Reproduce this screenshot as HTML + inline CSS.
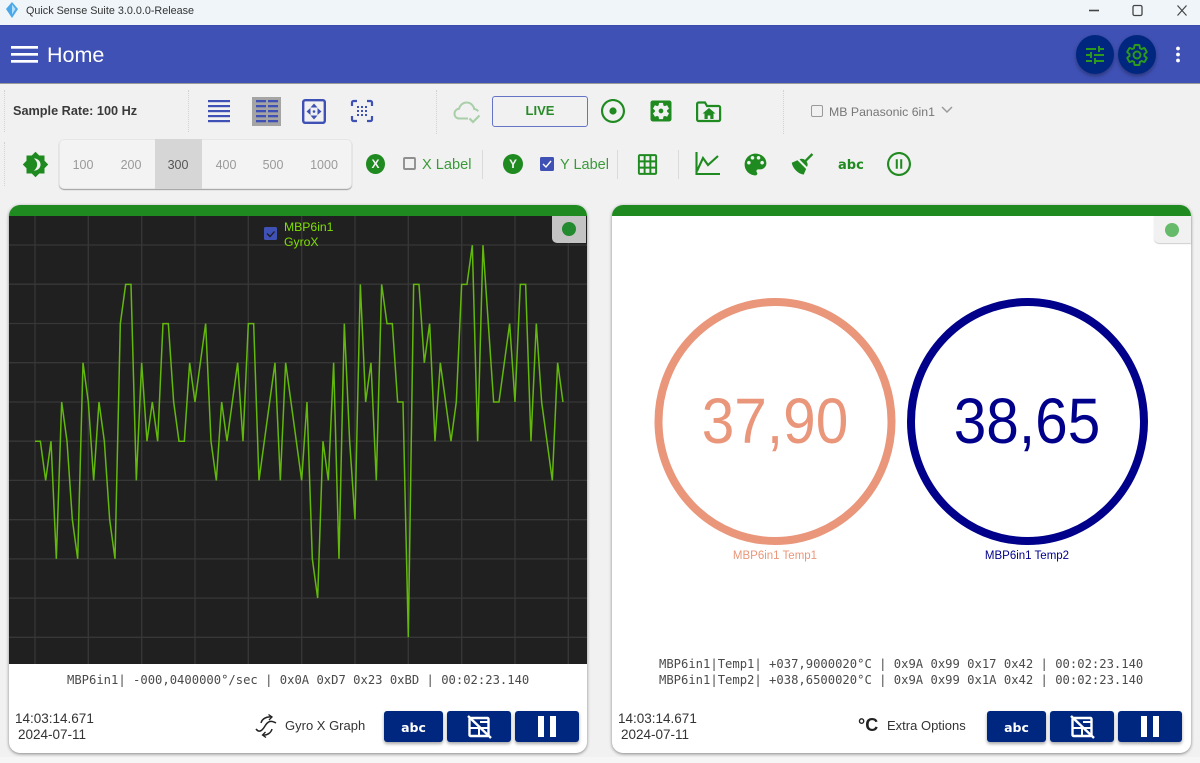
<!DOCTYPE html>
<html><head><meta charset="utf-8"><title>Quick Sense Suite</title>
<style>
html,body{margin:0;padding:0}
body{width:1200px;height:763px;overflow:hidden;position:relative;background:#f1f1f1;font-family:"Liberation Sans",sans-serif;color:#333}
.a{position:absolute;white-space:nowrap}
svg.a{overflow:visible}
.dot{position:absolute;width:0;border-left:1px dotted #d2d2d2}
.sep{position:absolute;width:1px;background:#dadada}
.card{position:absolute;top:205px;height:548px;background:#fff;border-radius:11px;box-shadow:0 1px 3px rgba(0,0,0,.45);overflow:hidden}
.bar{position:absolute;left:0;right:0;top:0;height:11px;background:#1f8a1f}
.btn{position:absolute;top:711px;height:31px;background:#00277f;border-radius:3px;box-shadow:0 2px 3px rgba(0,0,0,.35)}
.mono{font-family:"DejaVu Sans Mono",monospace;font-size:12.2px;color:#4a4a4a;line-height:16px}
.seg{position:absolute;top:157px;font-size:12.5px;color:#9a9a9a;line-height:16px;transform:translateX(-50%)}
.abc{font-family:"DejaVu Sans",sans-serif;font-weight:bold}
.big{transform:scaleX(.915);transform-origin:50% 50%}
</style></head><body>

<div class="a" style="left:0;top:757px;width:1200px;height:6px;background:#f6f6f6"></div>

<!-- title bar -->
<div class="a" style="left:0;top:0;width:1200px;height:25px;background:#eff5f9"></div>
<svg class="a" style="left:6px;top:2px" width="12" height="16" viewBox="0 0 12 16"><path d="M6 0L12 7 6 16 0 7z" fill="#4aa8ea"/><path d="M6 2.500L9.500 7 6 12.500z" fill="#b4e0fa"/></svg>
<div class="a" style="left:26px;top:4px;font-size:10.8px;line-height:15px;color:#333">Quick Sense Suite 3.0.0.0-Release</div>
<svg class="a" style="left:1085px;top:3px" width="110" height="16" viewBox="0 0 110 16" fill="none" stroke="#444"><path d="M4 7.500H14" stroke-width="1.600"/><rect x="48" y="2.500" width="9" height="10" rx="1.500" stroke-width="1.300"/><path d="M92.500 2.500L101.500 12.500M101.500 2.500L92.500 12.500" stroke-width="1.200"/></svg>

<!-- app bar -->
<div class="a" style="left:0;top:25px;width:1200px;height:59px;background:#3f51b5;border-top:1px solid #3a4aa8;box-sizing:border-box;border-bottom:1px solid #9a9a9a"></div>
<svg class="a" style="left:11px;top:46px" width="27" height="18"><rect y="0" width="27" height="2.700" fill="#fff"/><rect y="7" width="27" height="2.700" fill="#fff"/><rect y="14" width="27" height="2.700" fill="#fff"/></svg>
<div class="a" style="left:47px;top:41px;font-size:21.5px;line-height:28px;color:#fff">Home</div>
<div class="a" style="left:1076px;top:35px;width:38px;height:39px;border-radius:50%;background:#00277f;box-shadow:0 2px 4px rgba(0,0,0,.35)"></div>
<div class="a" style="left:1118px;top:35px;width:38px;height:39px;border-radius:50%;background:#00277f;box-shadow:0 2px 4px rgba(0,0,0,.35)"></div>
<svg class="a" style="left:1083px;top:43px" width="24" height="24" viewBox="0 0 24 24"><path fill="#2c9a1c" d="M3 17v2h6v-2H3zM3 5v2h10V5H3zm10 16v-2h8v-2h-8v-2h-2v6h2zM7 9v2H3v2h4v2h2V9H7zm14 4v-2H11v2h10zm-6-4h2V7h4V5h-4V3h-2v6z"/></svg>
<svg class="a" style="left:1125px;top:43px" width="24" height="24" viewBox="0 0 24 24"><path fill="none" stroke="#2c9a1c" stroke-width="1.900" d="M19.430 12.980c.04-.32.07-.64.07-.98s-.03-.66-.07-.98l2.110-1.650c.19-.15.24-.42.12-.64l-2-3.460c-.12-.22-.39-.3-.61-.22l-2.490 1c-.52-.4-1.080-.73-1.690-.98l-.38-2.650C14.460 2.180 14.250 2 14 2h-4c-.25 0-.46.18-.49.42l-.38 2.650c-.61.25-1.170.59-1.690.98l-2.490-1c-.23-.09-.49 0-.61.22l-2 3.460c-.13.22-.07.49.12.64l2.110 1.650c-.04.32-.07.65-.07.98s.03.66.07.98l-2.110 1.650c-.19.15-.24.42-.12.64l2 3.460c.12.22.39.3.61.22l2.490-1c.52.4 1.080.73 1.690.98l.38 2.650c.03.24.24.42.49.42h4c.25 0 .46-.18.49-.42l.38-2.650c.61-.25 1.170-.59 1.690-.98l2.490 1c.23.09.49 0 .61-.22l2-3.460c.12-.22.07-.49-.12-.64l-2.110-1.650zM12 15.500c-1.930 0-3.500-1.570-3.500-3.500s1.570-3.500 3.500-3.500 3.500 1.570 3.500 3.500-1.570 3.500-3.500 3.500z"/></svg>
<svg class="a" style="left:1175px;top:46px" width="7" height="18"><circle cx="3" cy="2.500" r="1.900" fill="#fff"/><circle cx="3" cy="8.500" r="1.900" fill="#fff"/><circle cx="3" cy="14.500" r="1.900" fill="#fff"/></svg>

<!-- toolbar row 1 -->
<div class="dot" style="left:4px;top:90px;height:42px"></div>
<div class="dot" style="left:4px;top:142px;height:44px"></div>
<div class="dot" style="left:188px;top:90px;height:42px"></div>
<div class="dot" style="left:436px;top:90px;height:44px"></div>
<div class="dot" style="left:783px;top:90px;height:44px"></div>
<div class="a" style="left:13px;top:103px;font-size:12.7px;line-height:16px;font-weight:bold;color:#3a3a3a">Sample Rate: 100 Hz</div>

<svg class="a" style="left:208px;top:100px" width="22" height="23" fill="#3f51b5"><rect y="0" width="22" height="2.200"/><rect y="5" width="22" height="2.200"/><rect y="10" width="22" height="2.200"/><rect y="15" width="22" height="2.200"/><rect y="20" width="22" height="2.200"/></svg>
<div class="a" style="left:252px;top:97px;width:29px;height:29px;background:#a4a4a4"></div>
<svg class="a" style="left:256px;top:100px" width="22" height="23" fill="#3f51b5"><rect y="0" width="10" height="2.300"/><rect x="12" y="0" width="10" height="2.300"/><rect y="5" width="10" height="2.300"/><rect x="12" y="5" width="10" height="2.300"/><rect y="10" width="10" height="2.300"/><rect x="12" y="10" width="10" height="2.300"/><rect y="15" width="10" height="2.300"/><rect x="12" y="15" width="10" height="2.300"/><rect y="20" width="10" height="2.300"/><rect x="12" y="20" width="10" height="2.300"/></svg>
<svg class="a" style="left:302px;top:99px" width="24" height="25" viewBox="0 0 24 25"><rect x="1.200" y="1.200" width="21.600" height="22.600" rx="2" fill="none" stroke="#3f51b5" stroke-width="2.400"/><path fill="#3f51b5" d="M12 4.500L8.500 8.500h7zM12 20.500L8.500 16.500h7zM4.500 12.500L8.500 9v7zM19.500 12.500L15.500 9v7z"/><circle cx="12" cy="12.500" r="1.300" fill="#3f51b5"/></svg>
<svg class="a" style="left:351px;top:100px" width="22" height="22" viewBox="0 0 22 22" fill="none" stroke="#3f51b5" stroke-width="2.200"><path d="M1 6V2.500C1 1.700 1.700 1 2.500 1H6M16 1h3.500c.8 0 1.500.7 1.500 1.500V6M21 16v3.500c0 .8-.7 1.500-1.500 1.500H16M6 21H2.500C1.700 21 1 20.300 1 19.500V16"/><g fill="#3f51b5" stroke="none"><rect x="6" y="6" width="2" height="2"/><rect x="10" y="6" width="2" height="2"/><rect x="14" y="6" width="2" height="2"/><rect x="6" y="10" width="2" height="2"/><rect x="10" y="10" width="2" height="2"/><rect x="14" y="10" width="2" height="2"/><rect x="6" y="14" width="2" height="2"/><rect x="10" y="14" width="2" height="2"/><rect x="14" y="14" width="2" height="2"/></g></svg>

<svg class="a" style="left:453px;top:100px" width="28" height="24" viewBox="0 0 28 24" fill="none" stroke="#a9cfa9" stroke-width="2"><path d="M15 18.500H6.500C3.500 18.500 1.500 16.500 1.500 13.500 1.500 11 3.500 9 6 8.800 7 5.200 10 2.500 13.500 2.500c4 0 7 2.800 7.700 6.500 1.300.2 3 .8 4 2.300"/><path d="M16.500 18.500l3.500 3.500 6.500-6.500" stroke-width="2.200"/></svg>
<div class="a" style="left:492px;top:96px;width:96px;height:31px;box-sizing:border-box;border:1.500px solid #6674c8;border-radius:3px;text-align:center;font-size:13px;font-weight:bold;line-height:28px;color:#2a8a2a">LIVE</div>
<svg class="a" style="left:601px;top:99px" width="24" height="24" viewBox="2 2 20 20"><path fill="#1f8a1f" d="M12 9a3 3 0 1 0 0 6 3 3 0 0 0 0-6zM12 2C6.480 2 2 6.480 2 12s4.480 10 10 10 10-4.480 10-10S17.520 2 12 2zm0 18.200c-4.530 0-8.200-3.670-8.200-8.200S7.470 3.800 12 3.800s8.200 3.670 8.200 8.200-3.670 8.200-8.200 8.200z"/></svg>
<svg class="a" style="left:647px;top:97px" width="28" height="28" viewBox="0 0 24 24"><path fill="#1f8a1f" fill-rule="evenodd" d="M12 10c-1.100 0-2 .9-2 2s.9 2 2 2 2-.9 2-2-.9-2-2-2zm7-7H5c-1.110 0-2 .9-2 2v14c0 1.100.89 2 2 2h14c1.110 0 2-.9 2-2V5c0-1.100-.89-2-2-2zm-1.750 9c0 .23-.02.46-.05.68l1.480 1.160c.13.11.17.3.08.45l-1.400 2.420c-.09.15-.27.21-.43.15l-1.740-.7c-.36.28-.76.51-1.180.69l-.26 1.850c-.03.17-.18.3-.35.3h-2.800c-.17 0-.32-.13-.35-.29l-.26-1.850c-.43-.18-.82-.41-1.180-.69l-1.740.7c-.16.06-.34 0-.43-.15l-1.400-2.420c-.09-.15-.05-.34.08-.45l1.480-1.160c-.03-.23-.05-.46-.05-.69 0-.23.02-.46.05-.68l-1.480-1.160c-.13-.11-.17-.3-.08-.45l1.400-2.420c.09-.15.27-.21.43-.15l1.740.7c.36-.28.76-.51 1.180-.69l.26-1.850c.03-.17.18-.3.35-.3h2.800c.17 0 .32.13.35.29l.26 1.850c.43.18.82.41 1.180.69l1.740-.7c.16-.06.34 0 .43.15l1.400 2.420c.09.15.05.34-.08.45l-1.480 1.160c.03.23.05.46.05.69z"/></svg>
<svg class="a" style="left:696px;top:101px" width="26" height="21" viewBox="0 0 26 21"><path fill="none" stroke="#1f8a1f" stroke-width="2.200" d="M1.100 3V18.500c0 .8.700 1.500 1.500 1.500h20c.8 0 1.500-.7 1.500-1.500V6.500c0-.8-.7-1.500-1.500-1.500H11L9 1.500H2.600C1.800 1.500 1.100 2.200 1.100 3z"/><path fill="#1f8a1f" d="M13 7L6.500 12.500h2V18h3.200v-3.500h2.600V18h3.200v-5.500h2z"/></svg>
<svg class="a" style="left:811px;top:105px" width="12" height="12"><rect x=".5" y=".5" width="11" height="11" rx="1.500" fill="none" stroke="#9a9a9a"/></svg>
<div class="a" style="left:829px;top:104px;font-size:12.3px;line-height:16px;color:#777">MB Panasonic 6in1</div>
<svg class="a" style="left:941px;top:106px" width="12" height="8"><path d="M1 1l5 5 5-5" fill="none" stroke="#9a9a9a" stroke-width="1.500"/></svg>

<!-- toolbar row 2 -->
<svg class="a" style="left:22px;top:151px" width="27" height="27" viewBox="0 0 24 24"><path fill="#1f8a1f" d="M20 15.310L23.310 12 20 8.690V4h-4.690L12 .69 8.690 4H4v4.690L.69 12 4 15.310V20h4.690L12 23.310 15.310 20H20v-4.690z"/><path fill="#f1f1f1" d="M10.500 6.500c3.500 0 6 2.500 6 5.500s-2.500 5.500-6 5.500c2-1.500 3-3.500 3-5.500s-1-4-3-5.500z"/></svg>

<div class="a" style="left:59px;top:139px;width:293px;height:50px;box-sizing:border-box;background:#f3f3f3;border:1px solid #e6e6e6;border-radius:5px;box-shadow:0 1px 1px rgba(0,0,0,.35)"></div>
<div class="a" style="left:155px;top:139px;width:47px;height:50px;background:#d6d6d6"></div>
<div class="seg" style="left:83px">100</div>
<div class="seg" style="left:131px">200</div>
<div class="seg" style="left:178px;color:#555">300</div>
<div class="seg" style="left:226px">400</div>
<div class="seg" style="left:273px">500</div>
<div class="seg" style="left:324px">1000</div>

<div class="a" style="left:366px;top:154px;width:19px;height:20px;border-radius:50%;background:#1f8a1f;color:#f3f3f3;font-size:12px;font-weight:bold;line-height:20px;text-align:center">X</div>
<svg class="a" style="left:403px;top:157px" width="13" height="13"><rect x="1" y="1" width="11" height="11" rx="1" fill="none" stroke="#8f8f8f" stroke-width="1.900"/></svg>
<div class="a" style="left:422px;top:157px;font-size:14.6px;line-height:17px;color:#3a9a3a">X Label</div>
<div class="sep" style="left:482px;top:150px;height:29px"></div>
<div class="a" style="left:503px;top:154px;width:20px;height:20px;border-radius:50%;background:#1f8a1f;color:#f3f3f3;font-size:12px;font-weight:bold;line-height:20px;text-align:center">Y</div>
<svg class="a" style="left:540px;top:157px" width="14" height="14"><rect width="14" height="14" rx="1.500" fill="#3f51b5"/><path d="M3 7l3 3 5-6" fill="none" stroke="#fff" stroke-width="1.400"/></svg>
<div class="a" style="left:560px;top:157px;font-size:14.5px;line-height:17px;color:#3a9a3a">Y Label</div>
<div class="sep" style="left:617px;top:150px;height:29px"></div>
<svg class="a" style="left:636px;top:152px" width="23" height="25" viewBox="0 0 24 24" preserveAspectRatio="none"><path fill="#1f8a1f" d="M20 2H4c-1.100 0-2 .9-2 2v16c0 1.100.9 2 2 2h16c1.100 0 2-.9 2-2V4c0-1.100-.9-2-2-2zM8 20H4v-4h4v4zm0-6H4v-4h4v4zm0-6H4V4h4v4zm6 12h-4v-4h4v4zm0-6h-4v-4h4v4zm0-6h-4V4h4v4zm6 12h-4v-4h4v4zm0-6h-4v-4h4v4zm0-6h-4V4h4v4z"/></svg>
<div class="sep" style="left:678px;top:150px;height:29px"></div>
<svg class="a" style="left:695px;top:152px" width="26" height="25" viewBox="0 0 26 25" fill="none" stroke="#1f8a1f" stroke-width="2.100"><path d="M1.500 0V22H25"/><path d="M2 19L8 6l5 7L23 4"/></svg>
<svg class="a" style="left:741px;top:150px" width="29" height="29" viewBox="0 0 24 24"><path fill="#1f8a1f" d="M12 3c-4.970 0-9 4.030-9 9s4.030 9 9 9c.83 0 1.500-.67 1.500-1.500 0-.39-.15-.74-.39-1.010-.23-.26-.38-.61-.38-.99 0-.83.67-1.500 1.500-1.500H16c2.760 0 5-2.240 5-5 0-4.420-4.030-8-9-8zm-5.500 9c-.83 0-1.500-.67-1.500-1.500S5.670 9 6.500 9 8 9.670 8 10.500 7.330 12 6.500 12zm3-4C8.670 8 8 7.330 8 6.500S8.670 5 9.500 5s1.500.67 1.500 1.500S10.330 8 9.500 8zm5 0c-.83 0-1.500-.67-1.500-1.500S13.670 5 14.500 5s1.500.67 1.500 1.500S15.330 8 14.500 8zm3 4c-.83 0-1.500-.67-1.500-1.500S16.670 9 17.500 9s1.500.67 1.500 1.500-.67 1.500-1.500 1.500z"/></svg>
<svg class="a" style="left:789px;top:150px" width="28" height="28" viewBox="0 0 24 24"><path fill="#1f8a1f" d="M19.360 2.720L20.780 4.140L15.060 9.850C16.130 11.390 16.280 13.240 15.380 14.440L9.060 8.120C10.260 7.220 12.110 7.370 13.650 8.440L19.360 2.720M5.930 17.570C3.920 15.560 2.690 13.160 2.350 10.920L7.230 8.830L14.670 16.270L12.580 21.150C10.340 20.810 7.940 19.580 5.930 17.570Z"/></svg>
<div class="a abc" style="left:838px;top:158px;font-size:13px;line-height:16px;color:#1f8a1f">abc</div>
<svg class="a" style="left:886.500px;top:152px" width="24" height="24" viewBox="2 2 20 20"><path fill="#1f8a1f" d="M9.300 16h1.700V8H9.300v8zM12 2C6.480 2 2 6.480 2 12s4.480 10 10 10 10-4.480 10-10S17.520 2 12 2zm0 18.200c-4.530 0-8.200-3.670-8.200-8.200S7.470 3.800 12 3.800s8.200 3.670 8.200 8.200-3.670 8.200-8.200 8.200zM13 16h1.700V8H13v8z"/></svg>

<!-- card 1 -->
<div class="card" style="left:9px;width:578px"><div class="bar"></div></div>
<svg class="a" style="left:9px;top:216px" width="578" height="448" viewBox="9 216 578 448">
<rect x="9" y="216" width="578" height="448" fill="#202020"/>
<g stroke="#373737" stroke-width="1.300">
<path d="M35 216V664M88.300 216V664M141.700 216V664M195 216V664M248.300 216V664M301.700 216V664M355 216V664M408.300 216V664M461.700 216V664M515 216V664M568.300 216V664"/>
<path d="M9 245H587M9 284.200H587M9 323.500H587M9 362.700H587M9 402H587M9 441.200H587M9 480.400H587M9 519.700H587M9 558.900H587M9 598.100H587M9 637.300H587"/>
</g>
<polyline transform="translate(35 441.200) scale(5.333 -39.200)" vector-effect="non-scaling-stroke" fill="none" stroke="#62b80c" stroke-width="1.500" stroke-linejoin="miter" points="0,0 1,0 2,-1 3,0 4,-3 5,1 6,0 7,-2 8,-3 9,2 10,1 11,-1 12,1 13,0 14,-2 15,-3 16,3 17,4 18,4 19,-1 20,2 21,0 22,1 23,0 24,3 25,3 26,1 27,0 28,0 29,2 30,1 31,2 32,3 33,0 34,-1 35,1 36,0 37,1 38,2 39,0 40,3 41,3 42,-1 43,0 44,1 45,2 46,-1 47,2 48,1 49,0 50,-1 51,1 52,-3 53,-4 54,0 55,-1 56,2 57,-3 58,3 59,0 60,-2 61,4 62,1 63,2 64,-1 65,4 66,3 67,3 68,1 69,1 70,-5 71,4 72,4 73,2 74,3 75,0 76,2 77,1 78,0 79,1 80,4 81,4 82,5 83,0 84,5 85,3 86,1 87,1 88,2 89,3 90,1 91,4 92,4 93,0 94,3 95,1 96,0 97,-1 98,2 99,1"/>
<rect x="264" y="227" width="13" height="13" rx="1.500" fill="#3f51b5"/>
<path d="M267 233.500l3 3 4.500-5" fill="none" stroke="#1c1c1c" stroke-width="1.300"/>
</svg>
<div class="a" style="left:284px;top:220px;font-size:12.2px;line-height:15px;color:#7fe000">MBP6in1<br>GyroX</div>
<div class="a" style="left:552px;top:216px;width:34px;height:27px;background:#c4c4c4;border-bottom-left-radius:5px"></div>
<div class="a" style="left:562px;top:222px;width:14px;height:14px;border-radius:50%;background:#238a2f"></div>
<div class="a mono" style="left:67px;top:672px">MBP6in1| -000,0400000°/sec | 0x0A 0xD7 0x23 0xBD | 00:02:23.140</div>
<div class="a" style="left:15px;top:711px;font-size:13.5px;line-height:16px;color:#333">14:03:14.671</div>
<div class="a" style="left:18px;top:727px;font-size:13.5px;line-height:16px;color:#333">2024-07-11</div>
<svg class="a" style="left:254px;top:714px" width="24" height="24" viewBox="0 0 24 24" fill="none" stroke="#222" stroke-width="1.500"><path d="M2 15C5 19 8 17 11 12S17 6 22 9"/><path d="M7 9C8 5 12 2.500 17 3M18 15c-1 4-5 6.500-9 6"/><path d="M14.500 .5L18 3l-3 3M11.500 18L8.500 21l3.500 2.500" stroke-width="1.300"/></svg>
<div class="a" style="left:285px;top:718px;font-size:13px;line-height:16px;color:#333">Gyro X Graph</div>
<div class="btn" style="left:384px;width:59px"></div>
<div class="a abc" style="left:384px;width:59px;top:720px;text-align:center;font-size:12.5px;line-height:15px;color:#fff">abc</div>
<div class="btn" style="left:447px;width:64px"></div>
<svg class="a" style="left:467px;top:715px" width="25" height="24" viewBox="0 0 25 24" fill="none" stroke="#fff" stroke-width="2.400"><rect x="2.500" y="3" width="19" height="18" rx="1"/><path d="M2 13H22M12 13V21M13 7H22" stroke-width="2"/><path d="M1 1L24 23" stroke-width="2.400"/></svg>
<div class="btn" style="left:515px;width:64px"></div>
<svg class="a" style="left:538px;top:716px" width="18" height="21" fill="#fff"><rect width="6" height="21"/><rect x="12" width="6" height="21"/></svg>

<!-- card 2 -->
<div class="card" style="left:612px;width:579px"><div class="bar"></div></div>
<div class="a" style="left:1154px;top:216px;width:37px;height:27px;background:#f1f1f1;border-bottom-left-radius:5px;box-shadow:0 1px 1px rgba(0,0,0,.2)"></div>
<div class="a" style="left:1165px;top:223px;width:14px;height:14px;border-radius:50%;background:#66bb6a"></div>
<svg class="a" style="left:640px;top:290px" width="520" height="260" viewBox="640 290 520 260" fill="none" stroke-width="8"><ellipse cx="775" cy="421.500" rx="116.500" ry="119.500" stroke="#ea967a"/><ellipse cx="1027.500" cy="421.500" rx="116.500" ry="119.500" stroke="#00008b"/></svg>
<div class="a big" style="left:655px;width:240px;top:384px;text-align:center;font-size:64px;line-height:74px;color:#ea967a">37,90</div>
<div class="a big" style="left:907px;width:240px;top:384px;text-align:center;font-size:64px;line-height:74px;color:#00008b">38,65</div>
<div class="a" style="left:655px;width:240px;top:549px;text-align:center;font-size:11.5px;line-height:15px;color:#ea967a">MBP6in1 Temp1</div>
<div class="a" style="left:907px;width:240px;top:549px;text-align:center;font-size:11.5px;line-height:15px;color:#00008b">MBP6in1 Temp2</div>
<div class="a mono" style="left:659px;top:656px">MBP6in1|Temp1| +037,9000020°C | 0x9A 0x99 0x17 0x42 | 00:02:23.140<br>MBP6in1|Temp2| +038,6500020°C | 0x9A 0x99 0x1A 0x42 | 00:02:23.140</div>
<div class="a" style="left:618px;top:711px;font-size:13.5px;line-height:16px;color:#333">14:03:14.671</div>
<div class="a" style="left:621px;top:727px;font-size:13.5px;line-height:16px;color:#333">2024-07-11</div>
<div class="a" style="left:858px;top:714px;font-size:18px;line-height:22px;font-weight:bold;color:#222">°C</div>
<div class="a" style="left:887px;top:718px;font-size:13px;line-height:16px;color:#333">Extra Options</div>
<div class="btn" style="left:987px;width:59px"></div>
<div class="a abc" style="left:987px;width:59px;top:720px;text-align:center;font-size:12.5px;line-height:15px;color:#fff">abc</div>
<div class="btn" style="left:1050px;width:64px"></div>
<svg class="a" style="left:1070px;top:715px" width="25" height="24" viewBox="0 0 25 24" fill="none" stroke="#fff" stroke-width="2.400"><rect x="2.500" y="3" width="19" height="18" rx="1"/><path d="M2 13H22M12 13V21M13 7H22" stroke-width="2"/><path d="M1 1L24 23" stroke-width="2.400"/></svg>
<div class="btn" style="left:1118px;width:64px"></div>
<svg class="a" style="left:1141px;top:716px" width="18" height="21" fill="#fff"><rect width="6" height="21"/><rect x="12" width="6" height="21"/></svg>
</body></html>
